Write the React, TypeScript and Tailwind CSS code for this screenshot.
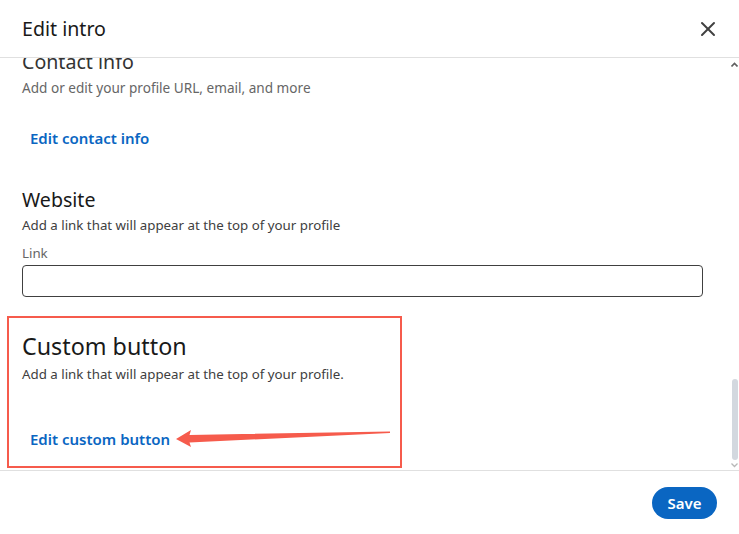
import { X } from 'lucide-react';

const font = { fontFamily: '"Noto Sans", "Open Sans", sans-serif' };

export default function App() {
  return (
    <div className="relative w-[739px] h-[534px] bg-white flex flex-col overflow-hidden text-[#191919]" style={font}>
      {/* Header */}
      <div className="h-[58px] shrink-0 flex items-center justify-between pl-[22px] pr-[19px] border-b border-[#e0e0e0]">
        <h1 className="text-[19.6px] leading-[28px] font-normal">Edit intro</h1>
        <button className="w-[24px] h-[24px] flex items-center justify-center text-[#404040]" aria-label="Close">
          <X size={24} strokeWidth={2} />
        </button>
      </div>

      {/* Body */}
      <div className="flex-1 flex min-h-0 border-b border-[#e0e0e0]">
        <div className="flex-1 overflow-hidden pl-[22px]">
          <div className="-mt-[10px] flex flex-col">
            <h2 className="text-[19.6px] leading-[28px] text-[#333]">Contact info</h2>
            <p className="mt-[2px] text-[13.6px] leading-[20px] text-[#666]">Add or edit your profile URL, email, and more</p>
            <a className="mt-[30px] ml-[8px] text-[15px] leading-[20px] font-semibold text-[#0a66c2]">Edit contact info</a>

            <h2 className="mt-[38px] text-[19.6px] leading-[28px]">Website</h2>
            <p className="mt-[1px] text-[13.3px] leading-[20px] text-[#404040]">Add a link that will appear at the top of your profile</p>
            <label className="mt-[8px] text-[13.3px] leading-[20px] text-[#666]">Link</label>
            <input className="mt-[2px] w-[681px] h-[32px] border border-[#404040] rounded-[4px] outline-none px-2" />

            <div className="mt-[19px] -ml-[15px] w-[395px] h-[152px] border-2 border-[#f65b4c] pt-[13px] pl-[13px] flex flex-col">
              <h2 className="text-[23.3px] leading-[30px] font-normal">Custom button</h2>
              <p className="mt-[4px] text-[13.3px] leading-[18px] text-[#404040]">Add a link that will appear at the top of your profile.</p>
              <a className="mt-[46px] ml-[8px] text-[15px] leading-[20px] font-semibold text-[#0a66c2]">Edit custom button</a>
            </div>
          </div>
        </div>

        {/* Scrollbar */}
        <div className="w-[9px] shrink-0 flex flex-col items-center pt-[3px] pb-[2px]">
          <svg width="7" height="5" viewBox="0 0 7 5" className="mt-[1px]">
            <path d="M0.5 4.5 L3.5 1.5 L6.5 4.5" fill="none" stroke="#606060" strokeWidth="1.6" />
          </svg>
          <div className="flex-1" />
          <div className="w-[6px] h-[81px] rounded-full bg-[#d3d8df]" />
          <svg width="7" height="5" viewBox="0 0 7 5" className="mt-[3px]">
            <path d="M0.5 0.5 L3.5 3.5 L6.5 0.5" fill="none" stroke="#b8b8b8" strokeWidth="1.3" />
          </svg>
        </div>
      </div>

      {/* Footer */}
      <div className="h-[63px] shrink-0 flex items-start justify-end pt-[16px] pr-[22px]">
        <button className="h-[32px] w-[65px] rounded-full bg-[#0a66c2] text-white text-[15px] font-semibold leading-[20px]">Save</button>
      </div>

      {/* Annotation arrow */}
      <svg className="absolute left-0 top-0 pointer-events-none" width="739" height="534">
        <polygon
          points="176,439 191,430 189.5,435 390,431.5 390,433 189.5,442.5 191,447"
          fill="#f65b4c"
        />
      </svg>
    </div>
  );
}
